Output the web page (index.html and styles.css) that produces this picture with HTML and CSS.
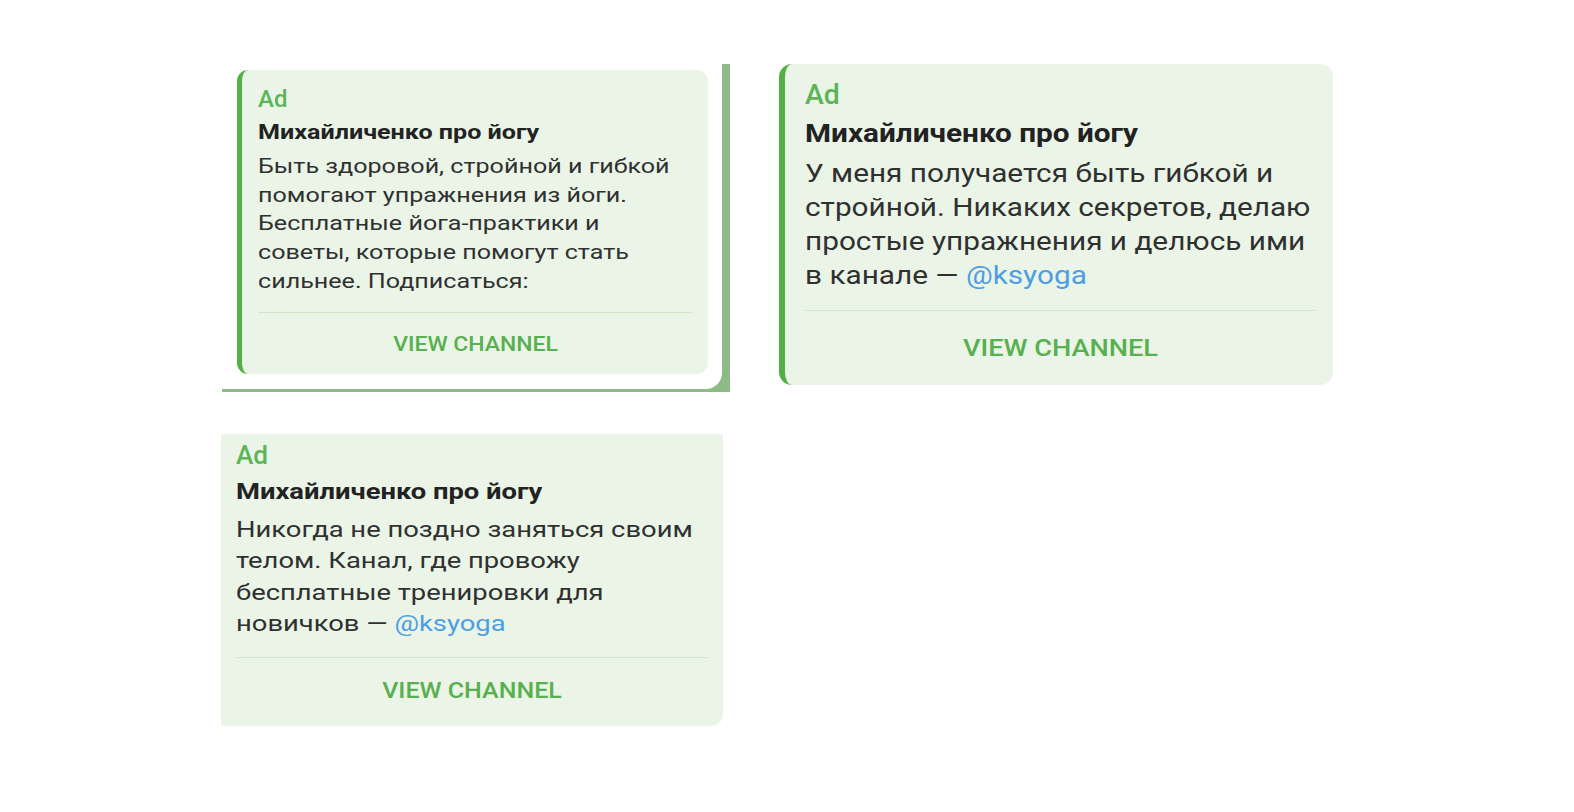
FILE: index.html
```html
<!DOCTYPE html>
<html lang="ru">
<head>
<meta charset="utf-8">
<title>Ad previews</title>
<link rel="stylesheet" href="styles.css">
</head>
<body>
<main class="page">
  <div class="row row--top">
    <div class="chat-frame">
      <div class="bubble">
        <article class="ad ad--one">
          <div class="ad__content">
            <div class="ad__label">Ad</div>
            <div class="ad__title">Михайличенко про йогу</div>
            <p class="ad__text">Быть здоровой, стройной и гибкой<br>помогают упражнения из йоги.<br>Бесплатные йога-практики и<br>советы, которые помогут стать<br>сильнее. Подписаться:</p>
            <div class="ad__divider"></div>
            <div class="ad__action">VIEW CHANNEL</div>
          </div>
        </article>
      </div>
    </div>
    <article class="ad ad--two">
      <div class="ad__content">
        <div class="ad__label">Ad</div>
        <div class="ad__title">Михайличенко про йогу</div>
        <p class="ad__text">У меня получается быть гибкой и<br>стройной. Никаких секретов, делаю<br>простые упражнения и делюсь ими<br>в канале — <span class="ad__link">@ksyoga</span></p>
        <div class="ad__divider"></div>
        <div class="ad__action">VIEW CHANNEL</div>
      </div>
    </article>
  </div>
  <div class="row row--bottom">
    <article class="ad ad--three">
      <div class="ad__content">
        <div class="ad__label">Ad</div>
        <div class="ad__title">Михайличенко про йогу</div>
        <p class="ad__text">Никогда не поздно заняться своим<br>телом. Канал, где провожу<br>бесплатные тренировки для<br>новичков — <span class="ad__link">@ksyoga</span></p>
        <div class="ad__divider"></div>
        <div class="ad__action">VIEW CHANNEL</div>
      </div>
    </article>
  </div>
</main>
</body>
</html>
```
FILE: styles.css
```css
* { box-sizing: border-box; }

html, body {
  margin: 0;
  padding: 0;
  background: #ffffff;
}

body {
  font-family: Roboto, "Liberation Sans", sans-serif;
  color: #262626;
}

.page {
  padding: 64px 0 0 221px;
}

.row {
  display: flex;
  align-items: flex-start;
}

.row--top {
  gap: 49px;
}

.row--bottom {
  margin-top: 42px;
}

/* chat background behind the first bubble */
.chat-frame {
  margin-left: 1px;
  width: 508px;
  padding: 0 8px 3px 0;
  background: #8dbb86;
}

.bubble {
  background: #ffffff;
  border-radius: 0 0 16px 0;
  padding: 6px 14px 15px 15px;
}

/* ad card */
.ad {
  --k: 1;
  background: #eaf5e7;
  border-left: 5px solid #52b044;
  border-radius: 11px;
  padding: calc(15px * var(--k)) 15px calc(17px * var(--k)) 16px;
}

.ad__content {
  white-space: nowrap;
}

.ad__label {
  font-size: calc(24px * var(--k));
  line-height: calc(28px * var(--k));
  font-weight: 500;
  color: #5cb457;
}

/* the source text is set in a wide cut: widen the glyphs horizontally */
.ad__title,
.ad__text {
  transform: scaleX(1.196);
  transform-origin: 0 50%;
}

.ad__title {
  margin-top: calc(5px * var(--k));
  font-size: calc(21px * var(--k));
  line-height: calc(28px * var(--k));
  font-weight: 700;
  color: #222222;
}

.ad__text {
  margin: calc(6px * var(--k)) 0 0;
  font-size: calc(21px * var(--k));
  line-height: calc(28.7px * var(--k));
  color: #303030;
}

.ad__link {
  color: #4f9ee3;
}

.ad__divider {
  margin-top: calc(16px * var(--k));
  height: 1px;
  background: #cfe7c8;
}

.ad__action {
  margin-top: calc(18px * var(--k));
  font-size: calc(20px * var(--k));
  line-height: calc(26px * var(--k));
  font-weight: 500;
  text-align: center;
  color: #58b04f;
  transform: scaleX(1.147);
}

.ad--one {
  width: 471px;
}

.ad--two {
  --k: 1.185;
  width: 554px;
  border-left-width: 6px;
  border-radius: 13px;
  padding-top: 14px;
  padding-left: 20px;
  padding-right: 17px;
  padding-bottom: 21px;
}

.ad--two .ad__divider {
  margin-top: 17px;
}

.ad--two .ad__action {
  margin-top: 22px;
}

.ad--three {
  --k: 1.09;
  width: 502px;
  border-left: 0;
  border-radius: 0 0 12px 0;
  padding-top: 6px;
  padding-left: 15px;
  padding-bottom: 20px;
}

.ad--three .ad__title {
  margin-top: 7px;
}
```
